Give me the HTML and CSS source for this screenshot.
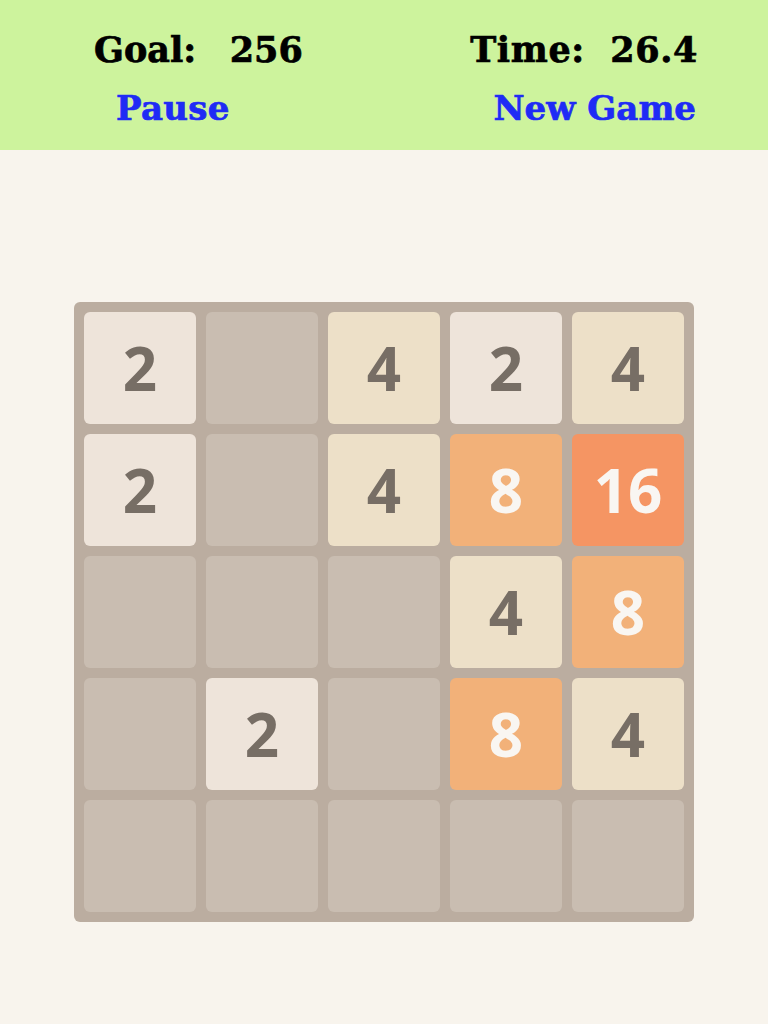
FILE: index.html
```html
<!DOCTYPE html>
<html>
<head>
<meta charset="utf-8">
<link rel="stylesheet" href="styles.css">
</head>
<body>
<header class="bar">
  <div class="col col-left">
    <div class="stat stat-goal">Goal:   256</div>
    <div class="link link-left">Pause</div>
  </div>
  <div class="col col-right">
    <div class="stat">Time:  26.4</div>
    <div class="link link-right">New Game</div>
  </div>
</header>
<main class="stage">
  <div class="board">
    <div class="tile t2">2</div>
    <div class="tile"></div>
    <div class="tile t4">4</div>
    <div class="tile t2">2</div>
    <div class="tile t4">4</div>

    <div class="tile t2">2</div>
    <div class="tile"></div>
    <div class="tile t4">4</div>
    <div class="tile t8">8</div>
    <div class="tile t16">16</div>

    <div class="tile"></div>
    <div class="tile"></div>
    <div class="tile"></div>
    <div class="tile t4">4</div>
    <div class="tile t8">8</div>

    <div class="tile"></div>
    <div class="tile t2">2</div>
    <div class="tile"></div>
    <div class="tile t8">8</div>
    <div class="tile t4">4</div>

    <div class="tile"></div>
    <div class="tile"></div>
    <div class="tile"></div>
    <div class="tile"></div>
    <div class="tile"></div>
  </div>
</main>
</body>
</html>
```
FILE: styles.css
```css
html, body {
  margin: 0;
  padding: 0;
}
body {
  width: 768px;
  height: 1024px;
  background: #f8f4ed;
  overflow: hidden;
}
.bar {
  height: 150px;
  background: #cdf39d;
  display: flex;
  justify-content: space-between;
  font-family: "DejaVu Serif", "Liberation Serif", serif;
  font-weight: bold;
  -webkit-text-stroke: 0.7px currentColor;
}
.col {
  display: flex;
  flex-direction: column;
  padding-top: 28px;
}
.col-left {
  padding-left: 94px;
  align-items: flex-start;
}
.col-right {
  padding-right: 70px;
  align-items: flex-end;
}
.stat {
  white-space: pre;
  font-size: 35px;
  line-height: 44px;
  letter-spacing: 0.6px;
  color: #000;
}
.stat-goal {
  letter-spacing: 0;
  word-spacing: -1px;
}
.link {
  font-size: 34px;
  line-height: 44px;
  margin-top: 14px;
  letter-spacing: 0.3px;
  color: #1f2bf5;
}
.link-left {
  margin-left: 22px;
}
.link-right {
  margin-right: 2px;
  letter-spacing: 0;
}
.stage {
  display: flex;
  justify-content: center;
  padding-top: 152px;
}
.board {
  width: 600px;
  padding: 10px;
  background: #bbada0;
  border-radius: 6px;
  display: grid;
  grid-template-columns: repeat(5, 112px);
  grid-auto-rows: 112px;
  gap: 10px;
}
.tile {
  background: #c9bdb1;
  border-radius: 6px;
  display: flex;
  align-items: center;
  justify-content: center;
  font-family: "Open Sans", "Noto Sans", sans-serif;
  font-weight: 700;
  font-size: 60px;
  color: #776e65;
}
.t2 { background: #eee4da; }
.t4 { background: #ede0c8; }
.t8 { background: #f2b179; color: #f9f6f2; }
.t16 { background: #f59563; color: #f9f6f2; }
```
